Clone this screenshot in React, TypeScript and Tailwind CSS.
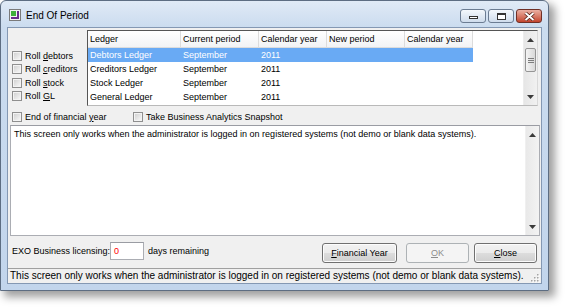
import React from 'react';

type Row = { ledger: string; period: string; year: string };

const rows: Row[] = [
    { ledger: 'Debtors Ledger', period: 'September', year: '2011' },
    { ledger: 'Creditors Ledger', period: 'September', year: '2011' },
    { ledger: 'Stock Ledger', period: 'September', year: '2011' },
    { ledger: 'General Ledger', period: 'September', year: '2011' },
];

const columns = [
    { label: 'Ledger', w: 'w-[93px]' },
    { label: 'Current period', w: 'w-[78px]' },
    { label: 'Calendar year', w: 'w-[68px]' },
    { label: 'New period', w: 'w-[78px]' },
    { label: 'Calendar year', w: 'w-[68px]' },
];

const notice = 'This screen only works when the administrator is logged in on registered systems (not demo or blank data systems).';

const Check: React.FC = () => (
    <span className="w-[10px] h-[10px] shrink-0 border border-[#8f8f8f] bg-gradient-to-br from-[#cdcdcd] to-[#fbfbfb] shadow-[inset_0_0_0_1px_#f3f3f3]" />
);

const CheckRow: React.FC<{ children: React.ReactNode; className?: string }> = ({ children, className = '' }) => (
    <div className={`flex items-center gap-[3px] h-[10px] ${className}`}>
        <Check />
        <span className="whitespace-nowrap">{children}</span>
    </div>
);

const Arrow: React.FC<{ up?: boolean }> = ({ up }) => (
    <svg width="7" height="4" viewBox="0 0 7 4">
        <path d={up ? 'M3.5 0 L7 4 L0 4 Z' : 'M0 0 L7 0 L3.5 4 Z'} fill="#3a3a3a" />
    </svg>
);

const AppIcon: React.FC = () => (
    <svg width="12" height="12" viewBox="0 0 12 12">
        <rect x="0.5" y="0.5" width="11" height="11" fill="#f4f4f4" stroke="#7a7a7a" />
        <rect x="2" y="2" width="5" height="5" fill="#3fae3a" />
        <rect x="8" y="2" width="2" height="8" fill="#6a2c8c" />
        <rect x="2" y="8" width="8" height="2" fill="#6a2c8c" />
    </svg>
);

const Grip: React.FC = () => (
    <svg width="10" height="10" viewBox="0 0 10 10">
        {[[8, 2], [8, 5], [5, 5], [8, 8], [5, 8], [2, 8]].map(([x, y], i) => (
            <g key={i}>
                <rect x={x} y={y} width="1.5" height="1.5" fill="#ffffff" />
                <rect x={x - 1} y={y - 1} width="1.5" height="1.5" fill="#a4a4a4" />
            </g>
        ))}
    </svg>
);

const WinButton: React.FC<{ children: React.ReactNode; w: string; disabled?: boolean }> = ({ children, w, disabled }) => (
    <div
        className={
            disabled
                ? `${w} h-[20px] flex items-center justify-center rounded-[3px] border border-[#adb2b5] bg-[#f4f4f4] text-[#8c8c8c]`
                : `${w} h-[20px] flex items-center justify-center rounded-[3px] border border-[#707070] bg-[linear-gradient(to_bottom,#f2f2f2_0%,#ebebeb_50%,#dddddd_50%,#cfcfcf_100%)] shadow-[inset_0_0_0_1px_#fcfcfc]`
        }
    >
        {children}
    </div>
);

export default function App() {
    return (
        <div className="w-[565px] h-[307px] bg-white overflow-hidden font-['Liberation_Sans',Arial,sans-serif] text-[9px] leading-[11px] text-black">
            {/* Window frame */}
            <div className="w-[549px] h-[291px] flex flex-col rounded-t-[6px] border border-[#5d6d82] bg-[linear-gradient(to_bottom,#e0eaf6_0px,#cbdcef_26px,#c2d5ec_100%)] shadow-[5px_5px_9px_1px_rgba(0,0,0,0.38)]">
                {/* Title bar */}
                <div className="h-[26px] flex items-start pt-[8px] pl-[8px] pr-[6px]">
                    <AppIcon />
                    <span className="ml-[5px] mt-[1px] text-[10px] leading-[12px]">End Of Period</span>
                    <div className="ml-auto flex gap-[2px]">
                        <div className="w-[26px] h-[14px] flex items-end justify-center pb-[3px] rounded-[3px] border border-[#6b7c92] bg-gradient-to-b from-[#f4f8fc] to-[#cfdcec]">
                            <span className="w-[9px] h-[3px] border border-[#333] bg-white" />
                        </div>
                        <div className="w-[26px] h-[14px] flex items-center justify-center rounded-[3px] border border-[#6b7c92] bg-gradient-to-b from-[#f4f8fc] to-[#cfdcec]">
                            <span className="w-[9px] h-[7px] border border-[#333] border-t-2 bg-white" />
                        </div>
                        <div className="w-[26px] h-[14px] flex items-center justify-center rounded-[3px] border border-[#6f3026] bg-gradient-to-b from-[#eab0a3] to-[#c2432d]">
                            <svg width="11" height="9" viewBox="0 0 11 9">
                                <path d="M1.5 1 L9.5 8 M9.5 1 L1.5 8" stroke="#4a1a12" strokeWidth="3.4" />
                                <path d="M1.5 1 L9.5 8 M9.5 1 L1.5 8" stroke="#ffffff" strokeWidth="2" />
                            </svg>
                        </div>
                    </div>
                </div>

                {/* Client area */}
                <div className="mx-[6px] mb-[6px] flex-1 flex flex-col border border-[#8498b3] bg-[#f0f0f0]">
                    {/* Roll checkboxes + ledger grid */}
                    <div className="flex h-[78px]">
                        <div className="w-[79px] pl-[4px] pt-[23px] flex flex-col">
                            <CheckRow>Roll <span className="underline">d</span>ebtors</CheckRow>
                            <CheckRow className="mt-[3px]">Roll <span className="underline">c</span>reditors</CheckRow>
                            <CheckRow className="mt-[4px]">Roll <span className="underline">s</span>tock</CheckRow>
                            <CheckRow className="mt-[3px]">Roll <span className="underline">G</span>L</CheckRow>
                        </div>
                        <div className="mt-[2px] w-[451px] h-[76px] flex border-t border-l border-[#555] border-b border-r border-b-[#b9b9b9] border-r-[#d9d9d9] bg-white">
                            <div className="flex-1 flex flex-col">
                                <div className="flex h-[17px]">
                                    {columns.map((c, i) => (
                                        <div key={i} className={`${c.w} flex items-center pl-[2px] border-r border-b border-[#dcdcdc] bg-gradient-to-b from-white to-[#f2f3f5]`}>
                                            {c.label}
                                        </div>
                                    ))}
                                </div>
                                {rows.map((r, i) => (
                                    <div key={i} className={`flex h-[14px] w-[385px] items-center ${i === 0 ? 'bg-[#69aaf4] text-white' : ''}`}>
                                        <div className="w-[93px] pl-[2px]">{r.ledger}</div>
                                        <div className="w-[78px] pl-[2px]">{r.period}</div>
                                        <div className="w-[68px] pl-[2px]">{r.year}</div>
                                        <div className="w-[78px]" />
                                        <div className="w-[68px]" />
                                    </div>
                                ))}
                            </div>
                            {/* Grid scrollbar */}
                            <div className="w-[14px] flex flex-col bg-gradient-to-r from-[#e6e6e6] to-[#f1f1f1] border-l border-[#ececec]">
                                <div className="h-[17px] flex items-center justify-center"><Arrow up /></div>
                                <div className="mx-[1px] h-[24px] rounded-[2px] border border-[#959595] bg-gradient-to-r from-[#f4f4f4] to-[#d9d9d9] flex flex-col items-center justify-center gap-[1px]">
                                    <span className="w-[6px] h-[1px] bg-[#7d7d7d]" />
                                    <span className="w-[6px] h-[1px] bg-[#7d7d7d]" />
                                    <span className="w-[6px] h-[1px] bg-[#7d7d7d]" />
                                </div>
                                <div className="flex-1" />
                                <div className="h-[17px] flex items-center justify-center"><Arrow /></div>
                            </div>
                        </div>
                    </div>

                    {/* Options */}
                    <div className="mt-[6px] pl-[4px] flex">
                        <div className="w-[121px]">
                            <CheckRow>End of financial <span className="underline">y</span>ear</CheckRow>
                        </div>
                        <CheckRow>Take Business Analytics Snapshot</CheckRow>
                    </div>

                    {/* Message memo */}
                    <div className="mt-[3px] ml-[2px] w-[530px] h-[111px] flex border border-[#abadb3] border-t-[#9a9ca3] bg-white">
                        <div className="flex-1 pl-[3px] pt-[3px]">{notice}</div>
                        <div className="w-[14px] flex flex-col justify-between bg-gradient-to-r from-[#e9e9e9] to-[#f3f3f3] border-l border-[#f0f0f0]">
                            <div className="h-[17px] flex items-center justify-center"><Arrow up /></div>
                            <div className="h-[17px] flex items-center justify-center"><Arrow /></div>
                        </div>
                    </div>

                    {/* Licensing + buttons */}
                    <div className="mt-[6px] flex items-start">
                        <div className="pl-[4px] h-[18px] flex items-center">
                            <span className="w-[98px] whitespace-nowrap">EXO Business licensing:</span>
                            <div className="w-[34px] h-[18px] flex items-center pl-[3px] border border-[#abadb3] border-t-[#9a9ca3] bg-white text-[#ff0000]">0</div>
                            <span className="ml-[4px]">days remaining</span>
                        </div>
                        <div className="ml-auto mr-[4px] mt-[1px] flex">
                            <WinButton w="w-[75px]"><span className="underline">F</span>inancial Year</WinButton>
                            <div className="ml-[9px]">
                                <WinButton w="w-[63px]" disabled><span className="underline">O</span>K</WinButton>
                            </div>
                            <div className="ml-[5px]">
                                <WinButton w="w-[63px]"><span className="underline">C</span>lose</WinButton>
                            </div>
                        </div>
                    </div>

                    {/* Status bar */}
                    <div className="mt-auto h-[15px] flex items-center pl-[2px] pr-[1px] border-t border-[#a0a0a0] text-[10px] leading-[12px]">
                        <span className="whitespace-nowrap">{notice}</span>
                        <div className="ml-auto self-end"><Grip /></div>
                    </div>
                </div>
            </div>
        </div>
    );
}
